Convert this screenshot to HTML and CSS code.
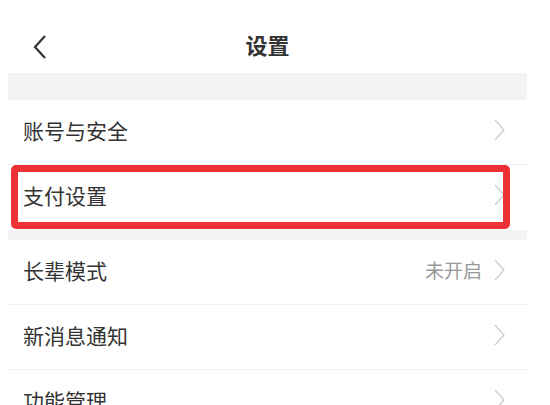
FILE: index.html
```html
<!DOCTYPE html>
<html lang="zh-CN">
<head>
<meta charset="utf-8">
<link rel="stylesheet" href="styles.css">
</head>
<body>
<div class="page">
  <header class="topbar">
    <svg class="back" width="16" height="26" viewBox="0 0 16 26"><path d="M13 2 L3 13 L13 24" fill="none" stroke="#333" stroke-width="2.2"/></svg>
    <h1 class="title">设置</h1>
  </header>
  <div class="gap gap-top"></div>
  <div class="row">
    <span class="label">账号与安全</span>
    <span class="chev"><svg width="11" height="22" viewBox="0 0 11 22"><path d="M1 1 L10 11 L1 21" fill="none" stroke="#ccc" stroke-width="1.3"/></svg></span>
  </div>
  <div class="row row-marked">
    <span class="label">支付设置</span>
    <span class="chev"><svg width="11" height="22" viewBox="0 0 11 22"><path d="M1 1 L10 11 L1 21" fill="none" stroke="#ccc" stroke-width="1.3"/></svg></span>
    <div class="mark"></div>
  </div>
  <div class="gap gap-mid"></div>
  <div class="row">
    <span class="label">长辈模式</span>
    <span class="value">未开启</span>
    <span class="chev"><svg width="11" height="22" viewBox="0 0 11 22"><path d="M1 1 L10 11 L1 21" fill="none" stroke="#ccc" stroke-width="1.3"/></svg></span>
  </div>
  <div class="row">
    <span class="label">新消息通知</span>
    <span class="chev"><svg width="11" height="22" viewBox="0 0 11 22"><path d="M1 1 L10 11 L1 21" fill="none" stroke="#ccc" stroke-width="1.3"/></svg></span>
  </div>
  <div class="row">
    <span class="label">功能管理</span>
    <span class="chev"><svg width="11" height="22" viewBox="0 0 11 22"><path d="M1 1 L10 11 L1 21" fill="none" stroke="#ccc" stroke-width="1.3"/></svg></span>
  </div>
</div>
</body>
</html>
```
FILE: styles.css
```css
html, body {
  background: #fff;
}
body {
  margin: 0 23px 0 8px;
  font-family: "Noto Sans CJK SC", "Noto Sans", sans-serif;
  color: #333;
  overflow: hidden;
  height: 405px;
}
.page {
  display: flex;
  flex-direction: column;
}
.topbar {
  position: relative;
  height: 59px;
  padding-top: 14px;
  display: flex;
  align-items: center;
  justify-content: center;
}
.back {
  position: absolute;
  left: 24px;
  top: 34px;
}
.title {
  margin: 0;
  font-size: 22px;
  font-weight: 700;
  color: #333;
  line-height: 1;
}
.gap {
  background: #f3f3f3;
}
.gap-top { height: 27px; }
.gap-mid { height: 10px; }
.row {
  position: relative;
  height: 65px;
  box-sizing: border-box;
  display: flex;
  align-items: center;
  padding: 0 22px 6px 15px;
  box-shadow: inset 0 -1px 0 #f0f0f0;
}
.label {
  flex: 1;
  font-size: 21px;
  color: #333;
}
.value {
  font-size: 19px;
  color: #999;
  margin-right: 12px;
}
.chev {
  display: flex;
  align-items: center;
}
.row-marked {
  box-shadow: none;
}
.mark {
  position: absolute;
  left: 3px;
  right: 17px;
  top: 0;
  bottom: 1px;
  border: 7px solid #ee3134;
  border-radius: 5px;
  box-sizing: border-box;
}
```
